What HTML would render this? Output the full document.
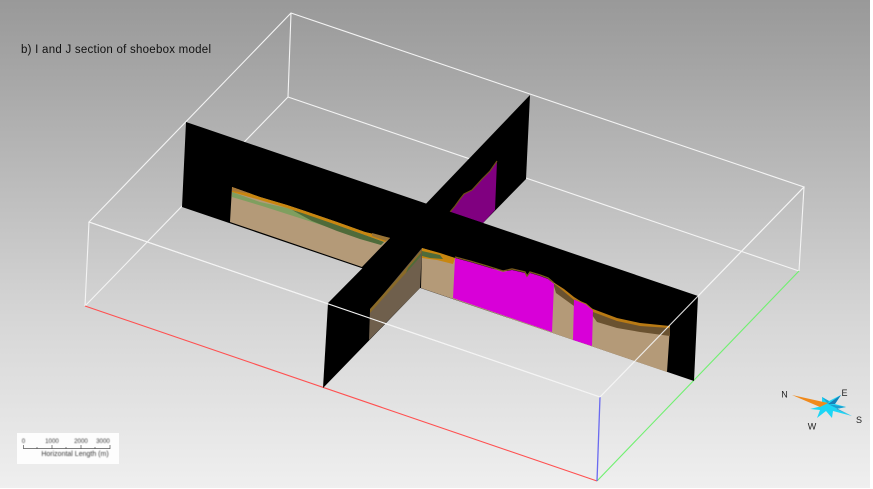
<!DOCTYPE html>
<html>
<head>
<meta charset="utf-8">
<style>
html,body{margin:0;padding:0;background:#fff;}
#w{position:relative;width:873px;height:489px;overflow:hidden;background:#fff;}
#bg{position:absolute;left:0;top:0;width:870px;height:488px;background:linear-gradient(#999999 0%,#a6a6a6 15%,#bebebe 40%,#d6d6d6 65%,#efefef 100%);}
svg{position:absolute;left:0;top:0;}
text{font-family:"Liberation Sans",sans-serif;}
</style>
</head>
<body>
<div id="w">
<div id="bg"></div>
<svg width="873" height="489" viewBox="0 0 873 489">
  <defs>
    <filter id="b" x="-5%" y="-5%" width="110%" height="110%"><feGaussianBlur stdDeviation="0.45"/></filter>
    <filter id="c" x="-20%" y="-20%" width="140%" height="140%"><feGaussianBlur stdDeviation="0.3"/></filter>
  </defs>
  <!-- back box edges -->
  <g stroke="#f4f4f4" stroke-width="1.1" fill="none">
    <path d="M291 13L804 187L600 397L89 222Z"/>
    <path d="M291 13L288 97"/>
    <path d="M288 97L799 271"/>
    <path d="M288 97L85 306"/>
    <path d="M804 187L799 271"/>
    <path d="M89 222L85 306"/>
  </g>
  <!-- coloured box edges -->
  <path d="M85 306L597 481" stroke="#ff5050" stroke-width="1.1" fill="none"/>
  <path d="M597 481L799 271" stroke="#70f070" stroke-width="1.1" fill="none"/>
  <path d="M600 397L597 481" stroke="#6a6af0" stroke-width="1.3" fill="none"/>

  <!-- back part of cross wall -->
  <path d="M530 95L526 179L483 223L420 210Z" fill="#000"/>
  <path d="M450 212L455 206L460 199L464 194L472 190L482 179L490 171L497 161L495 210L483 223Z" fill="#800080"/>
  <path d="M450 212L455 206L460 199L464 194L472 190L482 179L490 171L497 161" stroke="#6e4f14" stroke-width="1.2" fill="none"/>

  <!-- long wall -->
  <path d="M186 122L698 296L694 381L182 207Z" fill="#000"/>
  <!-- front of cross wall -->
  <path d="M425 205L328 303L323 388L420 288L440 230Z" fill="#000"/>

  <!-- left section -->
  <path d="M232 187L260 197L287 205L305 211L337 222L365 232L390 238L362 267L230 222Z" fill="#b49a78"/>
  <path d="M232 192L260 202L287 208L310 216L337 225L365 236L384 242L381 245L360 239L337 230L312 222L287 214L262 206L232 197Z" fill="#7f9f5f"/>
  <path d="M292 210L310 215L337 225L365 235L384 242L381 245L360 239L337 231L312 221Z" fill="#4f6b3a"/>
  <path d="M232 187L260 197L287 205L305 211L337 222L365 232L390 238L385 242L365 235L337 225L305 214L287 208L260 200L232 192Z" fill="#c8860f"/>
  <path d="M232 187L252 194L232 191Z" fill="#a87838"/>
  <path d="M372 233L390 238L386 241L372 236Z" fill="#9a7436"/>

  <!-- cross wall translucent section -->
  <path d="M422 248L420 288L369 340L370 310Z" fill="#6f5f4c"/>
  <path d="M422 249L396 280L370 309L370 313L396 284L421 256Z" fill="#8a6a28"/>
  <path d="M421 253L421 256L406 273L408 268Z" fill="#4f6b3a"/>

  <!-- right section tan -->
  <path d="M422 248L455 258L487 268L520 273L553 282L573 298L592 310L617 319L640 324L670 327L667 372L421 288Z" fill="#b49a78"/>
  <path d="M422 248L440 253L455 258L453 264L437 260L422 258Z" fill="#c8860f"/>
  <path d="M422 251L440 255L443 259L430 258L422 256Z" fill="#4f6b3a"/>
  <!-- dark upper crust right -->
  <path d="M553 283L564 290L574 298L593 310L617 319L640 324L670 327L670 336L640 332L617 328L597 322L592 315L574 306L556 293Z" fill="#6a5230"/>
  <path d="M553 282L564 289L574 297L593 309L617 318L640 323L670 326L670 328L640 326L617 321L593 312L574 300L556 285Z" fill="#b87a14"/>
  <!-- magenta -->
  <path d="M455 258L470 262L487 267L503 272L512 270L525 273L527 277L530 273L540 276L548 279L554 284L552 332L453 298Z" fill="#d800d8"/>
  <path d="M455 257L470 261L487 266L503 271L512 269L525 272L527 276L530 272L540 275L548 278L554 283" stroke="#7a5a1c" stroke-width="1.4" fill="none"/>
  <path d="M574 299L586 304L593 310L592 346L573 340Z" fill="#d800d8"/>
  <path d="M574 299L586 304L593 310" stroke="#a87414" stroke-width="1.1" fill="none"/>

  <!-- redraw front edges over sections -->
  <path d="M89 222L600 397" stroke="#f4f4f4" stroke-width="1.1" fill="none"/>
  <path d="M600 397L804 187" stroke="#f4f4f4" stroke-width="1.1" fill="none" opacity="0.9"/>

  <!-- scale legend -->
  <rect x="17" y="433" width="102" height="31" fill="#fdfdfd"/>
  <g font-size="6.2" fill="#3a3a3a" filter="url(#b)" text-anchor="middle">
    <text x="23.5" y="443">0</text>
    <text x="52" y="443">1000</text>
    <text x="81" y="443">2000</text>
    <text x="103" y="443">3000</text>
    <text x="75" y="456" font-size="7">Horizontal Length (m)</text>
  </g>
  <path d="M23.5 448.5H110M23.5 445V449M37 447V449M52 445V449M66 447V449M81 445V449M95 447V449M110 445V449" stroke="#555" stroke-width="0.7" fill="none" filter="url(#c)"/>

  <!-- compass -->
  <g filter="url(#c)">
    <path d="M822 397L829 401L841 395L835 404L846 407L836 409L852 416L833 411L832 418L826 411L817 418L820 410L810 409L822 406Z" fill="#1fd6f5"/>
    <path d="M828 404L841 395L835 404Z" fill="#137fb8"/>
    <path d="M828 404L846 407L836 409L852 416Z" fill="#1a9fd0"/>
    <path d="M822 397L829 401L828 404Z" fill="#1aa6d6"/>
    <path d="M792 395L828 403L820 407Z" fill="#f08a1e"/>
  </g>
  <g font-size="9" fill="#222" text-anchor="middle" filter="url(#c)">
    <text x="784.5" y="397.5">N</text>
    <text x="844.5" y="396">E</text>
    <text x="859" y="423">S</text>
    <text x="812" y="429.5">W</text>
  </g>

  <!-- title -->
  <text x="21" y="53" font-size="11.5" fill="#111" textLength="190" lengthAdjust="spacing">b) I and J section of shoebox model</text>
</svg>
</div>
</body>
</html>
